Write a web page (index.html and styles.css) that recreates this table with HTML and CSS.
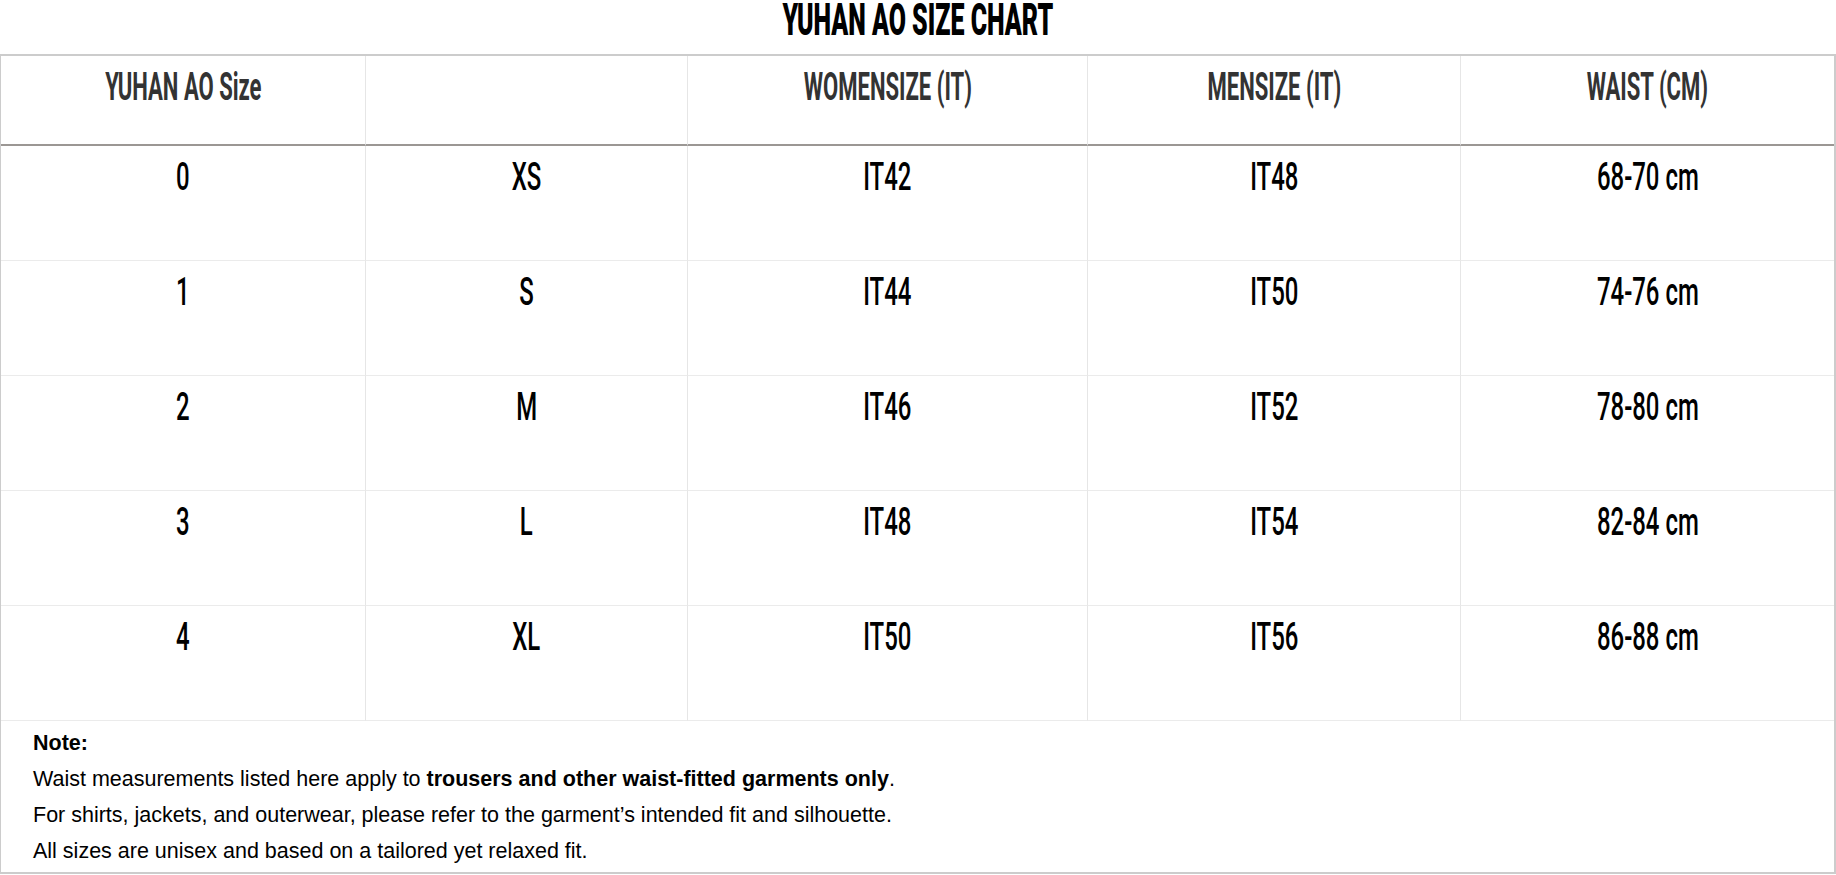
FILE: index.html
```
<!DOCTYPE html>
<html lang="en">
<head>
<meta charset="utf-8">
<title>YUHAN AO Size Chart</title>
<link rel="stylesheet" href="styles.css">
</head>
<body>
<h1 class="title"><span class="sq sq-title">YUHAN AO SIZE CHART</span></h1>
<div class="chart">
  <table class="size-table">
    <thead>
      <tr>
        <th class="col-a"><span class="sq sq-head">YUHAN AO Size</span></th>
        <th class="col-b"></th>
        <th class="col-c"><span class="sq sq-head">WOMENSIZE (IT)</span></th>
        <th class="col-d"><span class="sq sq-head">MENSIZE (IT)</span></th>
        <th class="col-e"><span class="sq sq-head">WAIST (CM)</span></th>
      </tr>
    </thead>
    <tbody>
      <tr>
        <td><span class="sq sq-body">0</span></td>
        <td><span class="sq sq-body">XS</span></td>
        <td><span class="sq sq-body">IT42</span></td>
        <td><span class="sq sq-body">IT48</span></td>
        <td><span class="sq sq-body">68-70 cm</span></td>
      </tr>
      <tr>
        <td><span class="sq sq-body">1</span></td>
        <td><span class="sq sq-body">S</span></td>
        <td><span class="sq sq-body">IT44</span></td>
        <td><span class="sq sq-body">IT50</span></td>
        <td><span class="sq sq-body">74-76 cm</span></td>
      </tr>
      <tr>
        <td><span class="sq sq-body">2</span></td>
        <td><span class="sq sq-body">M</span></td>
        <td><span class="sq sq-body">IT46</span></td>
        <td><span class="sq sq-body">IT52</span></td>
        <td><span class="sq sq-body">78-80 cm</span></td>
      </tr>
      <tr>
        <td><span class="sq sq-body">3</span></td>
        <td><span class="sq sq-body">L</span></td>
        <td><span class="sq sq-body">IT48</span></td>
        <td><span class="sq sq-body">IT54</span></td>
        <td><span class="sq sq-body">82-84 cm</span></td>
      </tr>
      <tr>
        <td><span class="sq sq-body">4</span></td>
        <td><span class="sq sq-body">XL</span></td>
        <td><span class="sq sq-body">IT50</span></td>
        <td><span class="sq sq-body">IT56</span></td>
        <td><span class="sq sq-body">86-88 cm</span></td>
      </tr>
    </tbody>
  </table>
  <div class="note">
    <p class="note-line"><strong>Note:</strong></p>
    <p class="note-line">Waist measurements listed here apply to <strong>trousers and other waist-fitted garments only</strong>.</p>
    <p class="note-line">For shirts, jackets, and outerwear, please refer to the garment’s intended fit and silhouette.</p>
    <p class="note-line">All sizes are unisex and based on a tailored yet relaxed fit.</p>
  </div>
</div>
</body>
</html>
```
FILE: styles.css
```
html, body {
  margin: 0;
  padding: 0;
  background: #ffffff;
}

body {
  font-family: "Liberation Sans", Arial, sans-serif;
  color: #000;
}

.title {
  margin: 0;
  padding: 4px 0 19px;
  text-align: center;
  font-family: Roboto, "Liberation Sans", sans-serif;
  font-weight: 900;
  font-size: 44px;
  line-height: 52px;
  color: #000;
  text-box: trim-both cap alphabetic;
}

.sq {
  display: inline-block;
  white-space: nowrap;
}

.sq-title {
  transform: scaleX(0.567);
  text-box: trim-both cap alphabetic;
}

.sq-head {
  transform: scaleX(0.565);
}

.sq-body {
  transform: scaleX(0.63);
}

.chart {
  border-top: 2px solid #cccccc;
  border-left: 1px solid #cccccc;
  border-right: 2px solid #cccccc;
  border-bottom: 2px solid #cccccc;
}

.size-table {
  width: 100%;
  table-layout: fixed;
  border-collapse: separate;
  border-spacing: 0;
  font-family: Roboto, "Liberation Sans", sans-serif;
}

.size-table th,
.size-table td {
  box-sizing: border-box;
  vertical-align: top;
  text-align: center;
  border-left: 1px solid #e6e6e6;
}

.size-table th:first-child,
.size-table td:first-child {
  border-left: 0;
}

.size-table th {
  padding: 8px 0 33px;
  font-size: 39px;
  line-height: 47px;
  font-weight: 700;
  color: #333333;
  border-bottom: 2px solid #9b9794;
}

.size-table td {
  padding: 8px 0 60px;
  font-size: 38px;
  line-height: 46px;
  font-weight: 500;
  color: #000;
  border-bottom: 1px solid #ebebeb;
}

.col-a { width: 364px; }
.col-b { width: 322px; }
.col-c { width: 400px; }
.col-d { width: 373px; }
.col-e { width: auto; }

.note {
  padding: 4px 0 3px 32px;
}

.note-line {
  margin: 0;
  font-size: 21.5px;
  line-height: 36px;
  color: #000;
}

.note-line strong {
  font-weight: 700;
}
```
